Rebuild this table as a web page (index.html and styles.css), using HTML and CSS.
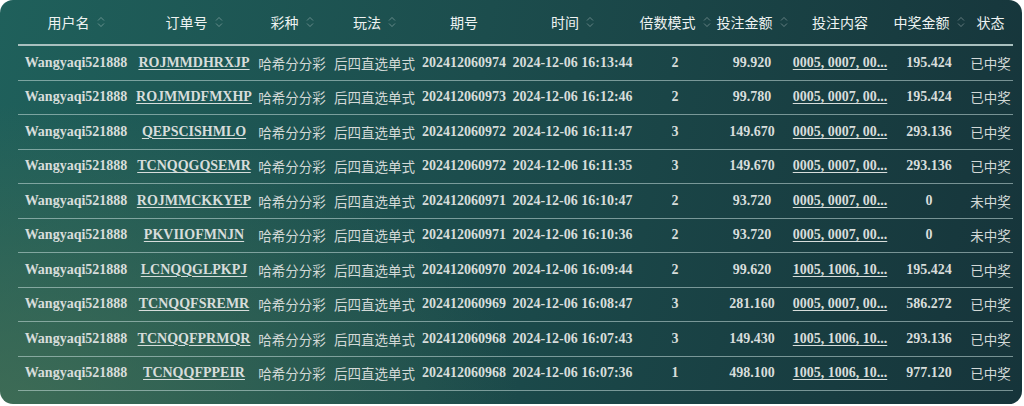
FILE: index.html
```html
<!DOCTYPE html>
<html lang="zh-CN">
<head>
    <meta charset="UTF-8">
    <title>投注记录</title>
    <link rel="stylesheet" href="styles.css">
</head>
<body>
    <div class="panel">
        <table class="records">
            <colgroup>
                <col style="width:116px"><col style="width:120px"><col style="width:76px"><col style="width:89px">
                <col style="width:90px"><col style="width:127px"><col style="width:78px"><col style="width:76px">
                <col style="width:100px"><col style="width:78px"><col style="width:45px">
            </colgroup>
            <thead>
                <tr>
                    <th><span class="th">用户名<svg class="sort" viewBox="0 0 8 14"><path d="M1 5.5L4 2.5L7 5.5M1 8.5L4 11.5L7 8.5"/></svg></span></th>
                    <th><span class="th">订单号<svg class="sort" viewBox="0 0 8 14"><path d="M1 5.5L4 2.5L7 5.5M1 8.5L4 11.5L7 8.5"/></svg></span></th>
                    <th><span class="th">彩种<svg class="sort" viewBox="0 0 8 14"><path d="M1 5.5L4 2.5L7 5.5M1 8.5L4 11.5L7 8.5"/></svg></span></th>
                    <th><span class="th">玩法<svg class="sort" viewBox="0 0 8 14"><path d="M1 5.5L4 2.5L7 5.5M1 8.5L4 11.5L7 8.5"/></svg></span></th>
                    <th><span class="th">期号</span></th>
                    <th><span class="th">时间<svg class="sort" viewBox="0 0 8 14"><path d="M1 5.5L4 2.5L7 5.5M1 8.5L4 11.5L7 8.5"/></svg></span></th>
                    <th><span class="th">倍数模式<svg class="sort" viewBox="0 0 8 14"><path d="M1 5.5L4 2.5L7 5.5M1 8.5L4 11.5L7 8.5"/></svg></span></th>
                    <th><span class="th">投注金额<svg class="sort" viewBox="0 0 8 14"><path d="M1 5.5L4 2.5L7 5.5M1 8.5L4 11.5L7 8.5"/></svg></span></th>
                    <th><span class="th">投注内容</span></th>
                    <th><span class="th">中奖金额<svg class="sort" viewBox="0 0 8 14"><path d="M1 5.5L4 2.5L7 5.5M1 8.5L4 11.5L7 8.5"/></svg></span></th>
                    <th><span class="th">状态</span></th>
                </tr>
            </thead>
            <tbody>
                <tr><td>Wangyaqi521888</td><td><a>ROJMMDHRXJP</a></td><td class="cn">哈希分分彩</td><td class="cn">后四直选单式</td><td>202412060974</td><td>2024-12-06 16:13:44</td><td>2</td><td>99.920</td><td><a>0005, 0007, 00...</a></td><td>195.424</td><td class="cn">已中奖</td></tr>
                <tr><td>Wangyaqi521888</td><td><a>ROJMMDFMXHP</a></td><td class="cn">哈希分分彩</td><td class="cn">后四直选单式</td><td>202412060973</td><td>2024-12-06 16:12:46</td><td>2</td><td>99.780</td><td><a>0005, 0007, 00...</a></td><td>195.424</td><td class="cn">已中奖</td></tr>
                <tr><td>Wangyaqi521888</td><td><a>QEPSCISHMLO</a></td><td class="cn">哈希分分彩</td><td class="cn">后四直选单式</td><td>202412060972</td><td>2024-12-06 16:11:47</td><td>3</td><td>149.670</td><td><a>0005, 0007, 00...</a></td><td>293.136</td><td class="cn">已中奖</td></tr>
                <tr><td>Wangyaqi521888</td><td><a>TCNQQGQSEMR</a></td><td class="cn">哈希分分彩</td><td class="cn">后四直选单式</td><td>202412060972</td><td>2024-12-06 16:11:35</td><td>3</td><td>149.670</td><td><a>0005, 0007, 00...</a></td><td>293.136</td><td class="cn">已中奖</td></tr>
                <tr><td>Wangyaqi521888</td><td><a>ROJMMCKKYEP</a></td><td class="cn">哈希分分彩</td><td class="cn">后四直选单式</td><td>202412060971</td><td>2024-12-06 16:10:47</td><td>2</td><td>93.720</td><td><a>0005, 0007, 00...</a></td><td>0</td><td class="cn">未中奖</td></tr>
                <tr><td>Wangyaqi521888</td><td><a>PKVIIOFMNJN</a></td><td class="cn">哈希分分彩</td><td class="cn">后四直选单式</td><td>202412060971</td><td>2024-12-06 16:10:36</td><td>2</td><td>93.720</td><td><a>0005, 0007, 00...</a></td><td>0</td><td class="cn">未中奖</td></tr>
                <tr><td>Wangyaqi521888</td><td><a>LCNQQGLPKPJ</a></td><td class="cn">哈希分分彩</td><td class="cn">后四直选单式</td><td>202412060970</td><td>2024-12-06 16:09:44</td><td>2</td><td>99.620</td><td><a>1005, 1006, 10...</a></td><td>195.424</td><td class="cn">已中奖</td></tr>
                <tr><td>Wangyaqi521888</td><td><a>TCNQQFSREMR</a></td><td class="cn">哈希分分彩</td><td class="cn">后四直选单式</td><td>202412060969</td><td>2024-12-06 16:08:47</td><td>3</td><td>281.160</td><td><a>0005, 0007, 00...</a></td><td>586.272</td><td class="cn">已中奖</td></tr>
                <tr><td>Wangyaqi521888</td><td><a>TCNQQFPRMQR</a></td><td class="cn">哈希分分彩</td><td class="cn">后四直选单式</td><td>202412060968</td><td>2024-12-06 16:07:43</td><td>3</td><td>149.430</td><td><a>1005, 1006, 10...</a></td><td>293.136</td><td class="cn">已中奖</td></tr>
                <tr><td>Wangyaqi521888</td><td><a>TCNQQFPPEIR</a></td><td class="cn">哈希分分彩</td><td class="cn">后四直选单式</td><td>202412060968</td><td>2024-12-06 16:07:36</td><td>1</td><td>498.100</td><td><a>1005, 1006, 10...</a></td><td>977.120</td><td class="cn">已中奖</td></tr>
            </tbody>
        </table>
    </div>
</body>
</html>
```

FILE: styles.css
```css
body {
    margin: 0;
    background: #fff;
}
.panel {
    width: 1022px;
    height: 404px;
    box-sizing: border-box;
    padding: 0 9px 0 18px;
    border-radius: 13px;
    background:
        radial-gradient(ellipse 520px 300px at 0% 100%, rgba(72, 112, 84, 0.75), rgba(72, 112, 84, 0) 100%),
        linear-gradient(100deg, #1f605b 0%, #1c4d4d 45%, #16343a 100%);
    overflow: hidden;
}
.records {
    width: 995px;
    table-layout: fixed;
    border-collapse: collapse;
    color: #d7dddb;
}
.records th {
    height: 44px;
    padding: 0;
    font-family: "Noto Sans CJK SC", "Noto Sans", sans-serif;
    font-size: 14px;
    font-weight: normal;
    color: #eef3f2;
    text-align: center;
    border-bottom: 2px solid #a9c0bf;
}
.th {
    display: inline-flex;
    align-items: center;
    gap: 7px;
    white-space: nowrap;
}
.sort {
    width: 8px;
    height: 14px;
    fill: none;
    stroke: rgba(255, 255, 255, 0.32);
    stroke-width: 1;
}
.records td {
    height: 33.5px;
    padding: 0;
    text-align: center;
    white-space: nowrap;
    font-family: "Liberation Serif", "Noto Sans CJK SC", serif;
    font-size: 14px;
    font-weight: bold;
    border-bottom: 1px solid rgba(200, 222, 220, 0.55);
}
.records td.cn {
    font-family: "Noto Sans CJK SC", sans-serif;
    font-weight: normal;
    font-size: 13.5px;
    color: #d3d9d7;
}
.records a {
    color: #d7dddb;
    text-decoration: underline;
    text-underline-offset: 2px;
}
```
